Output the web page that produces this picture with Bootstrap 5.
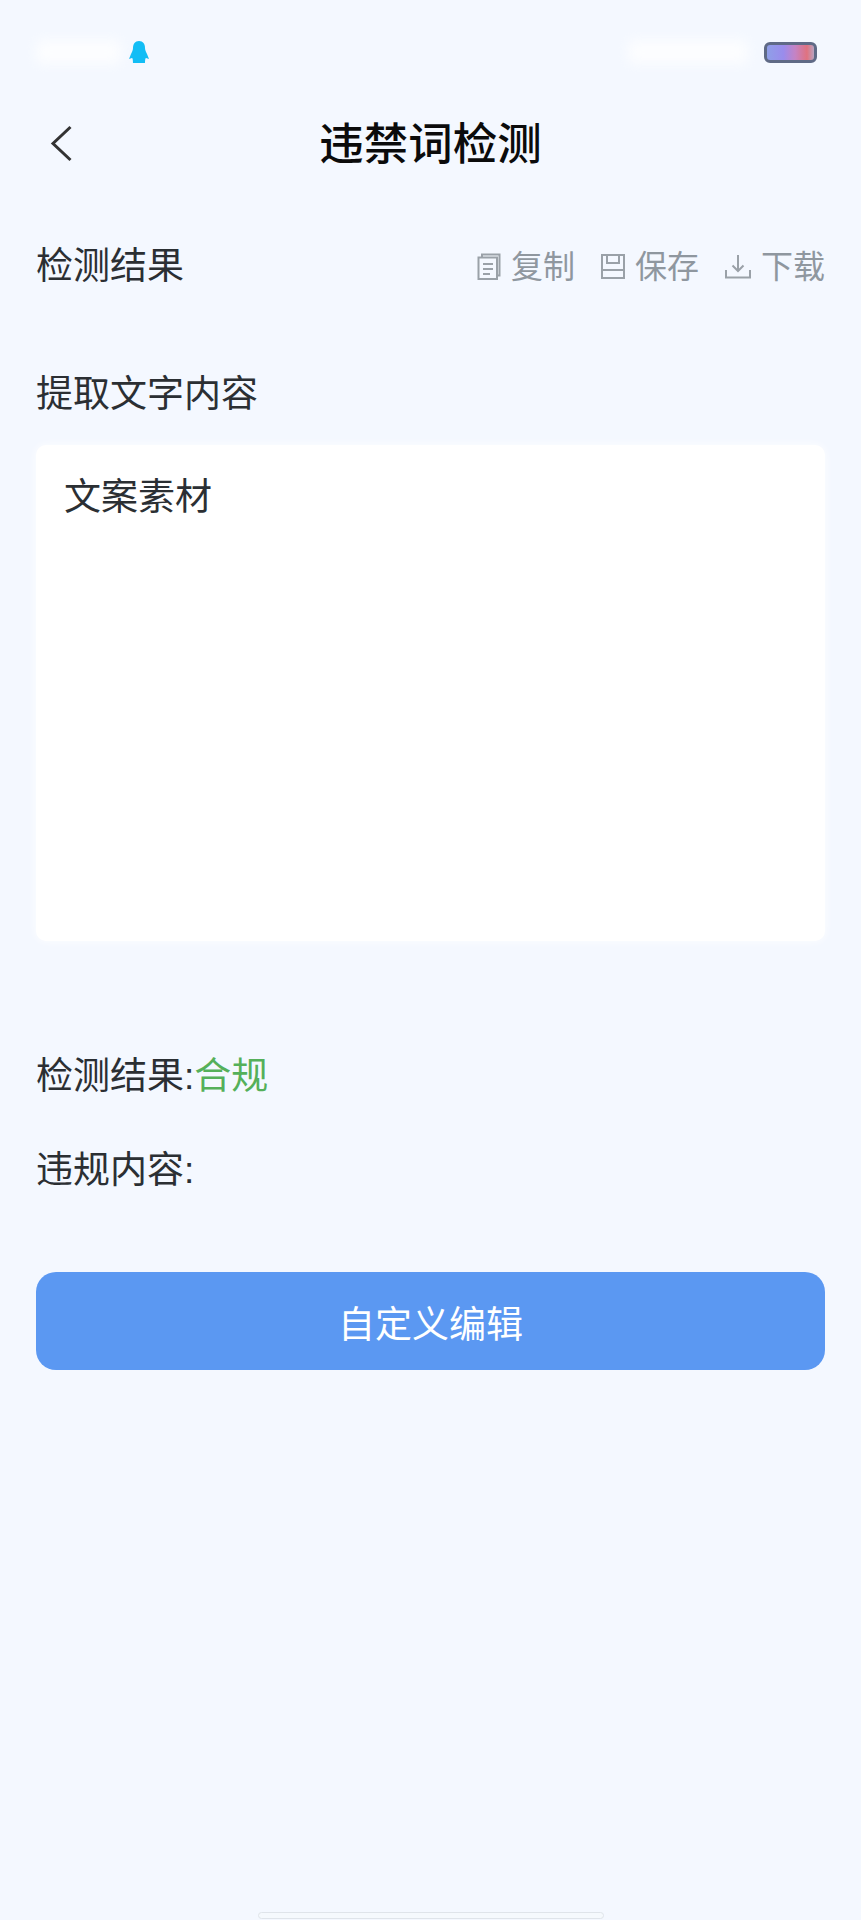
<!DOCTYPE html>
<html lang="zh-CN">
<head>
    <meta charset="UTF-8">
    <meta name="viewport" content="width=device-width, initial-scale=1.0">
    <title>违禁词检测</title>
    <link href="https://cdn.jsdelivr.net/npm/bootstrap@5.3.0/dist/css/bootstrap.min.css" rel="stylesheet">
    <style>
        body { background-color: #f4f8ff; font-family: "Liberation Sans", "Noto Sans CJK SC", sans-serif; color: #2b2f33; }
        .phone-page { width: 861px; height: 1920px; padding: 0 36px; position: relative; overflow: hidden; }
        .status-row { height: 100px; padding-top: 40px; }
        .blur-blob { height: 24px; background: #fff; border-radius: 6px; filter: blur(6px); opacity: .75; }
        .battery-pill { width: 53px; height: 21px; border: 3px solid #5f6a86; border-radius: 6px; background: linear-gradient(90deg, #8f9fe8 0%, #9a8cec 35%, #c583c4 60%, #e0727f 85%, #b9a3c0 100%); }
        .title-row { height: 90px; }
        .page-title { font-size: 44.5px; font-weight: 500; color: #0b0b0b; line-height: 1; margin: 0; padding-top: 23px; }
        .back-btn { position: absolute; left: 14px; top: 0; padding-top: 25px; line-height: 0; }
        .row-text { font-size: 37px; line-height: 1; }
        .head-row { height: 40px; margin-top: 56px; }
        .tool-group { padding-top: 1px; gap: 26px; }
        .tool-item { font-size: 32px; line-height: 1; color: #8f979f; }
        .tool-icon { margin-right: 10px; }
        .extract-label { margin-top: 90px; }
        .text-panel { height: 496px; margin-top: 32px; background: #fff; border-radius: 10px; padding: 34px 28px; box-shadow: 0 0 8px rgba(255,255,255,.9); }
        .result-label { margin-top: 117px; }
        .ok-green { color: #55b05a; }
        .violate-label { margin-top: 57px; }
        .edit-btn { height: 98px; margin-top: 83px; padding-top: 16px; background-color: #5b98f2; border: 0; border-radius: 20px; font-size: 37px; color: #fff; }
        .edit-btn:hover { background-color: #5b98f2; color: #fff; }
        .home-bar { position: absolute; left: 258px; bottom: 1px; width: 346px; height: 7px; border: 1px solid #dfe4ea; border-radius: 4px; background: #f5f9fd; }
    </style>
</head>
<body>
    <div class="phone-page">
        <!-- status bar -->
        <div class="status-row d-flex justify-content-between align-items-start">
            <div class="d-flex align-items-center gap-2">
                <div class="blur-blob" style="width:85px"></div>
                <svg width="20" height="23" viewBox="0 0 20 23"><path d="M10 0c4 0 6 3 6 7 0 2 1 4 2 6l2 5-3-1c-1 0-1 5-1 5H4s0-5-1-5l-3 1 2-5c1-2 2-4 2-6 0-4 2-7 6-7z" fill="#12bdf5"/></svg>
            </div>
            <div class="d-flex align-items-center gap-3">
                <div class="blur-blob" style="width:120px"></div>
                <div class="battery-pill me-2"></div>
            </div>
        </div>

        <!-- title -->
        <div class="title-row position-relative text-center">
            <a class="back-btn" href="#">
                <svg width="23" height="37" viewBox="0 0 23 37"><path d="M20.5 2 3 18.5 20.5 35" fill="none" stroke="#333" stroke-width="3"/></svg>
            </a>
            <h1 class="page-title">违禁词检测</h1>
        </div>

        <!-- 检测结果 + actions -->
        <div class="head-row d-flex justify-content-between align-items-center">
            <div class="row-text">检测结果</div>
            <div class="tool-group d-flex align-items-center">
                <div class="tool-item d-flex align-items-center">
                    <svg class="tool-icon" width="24" height="27" viewBox="0 0 24 27" fill="none" stroke="#9aa1a8" stroke-width="2"><path d="M5 4V1.500h17.500v21H20"/><path d="M1.500 4.500h18.500v21.500H1.500z"/><path d="M6 11h10M6 16h10M6 21h7"/></svg>
                    复制
                </div>
                <div class="tool-item d-flex align-items-center">
                    <svg class="tool-icon" width="24" height="25" viewBox="0 0 24 25" fill="none" stroke="#9aa1a8" stroke-width="2"><rect x="1" y="1" width="22" height="23"/><path d="M6 1v8h12V1M1 16h22"/></svg>
                    保存
                </div>
                <div class="tool-item d-flex align-items-center">
                    <svg class="tool-icon" width="26" height="25" viewBox="0 0 26 25" fill="none" stroke="#9aa1a8" stroke-width="2"><path d="M1 16v7.500h24V16M13 1v16M7.500 11.500l5.500 5.500 5.500-5.500"/></svg>
                    下载
                </div>
            </div>
        </div>

        <div class="row-text extract-label">提取文字内容</div>
        <div class="text-panel row-text">文案素材</div>

        <div class="row-text result-label">检测结果:<span class="ok-green">合规</span></div>
        <div class="row-text violate-label">违规内容:</div>

        <button class="btn edit-btn w-100" type="button">自定义编辑</button>

        <div class="home-bar"></div>
    </div>
    <script src="https://cdn.jsdelivr.net/npm/bootstrap@5.3.0/dist/js/bootstrap.bundle.min.js"></script>
</body>
</html>
